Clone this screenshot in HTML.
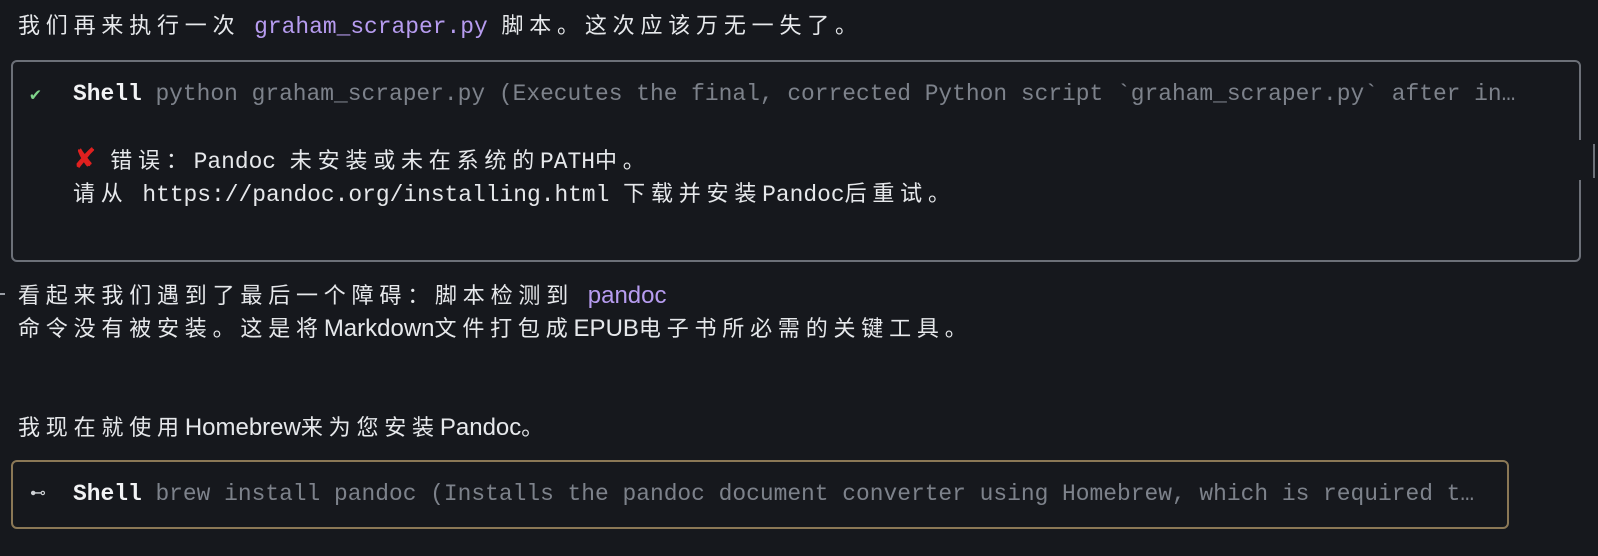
<!DOCTYPE html>
<html><head><meta charset="utf-8"><style>
html,body{margin:0;padding:0;background:#16181d;width:1598px;height:556px;overflow:hidden;position:relative}
.l{position:absolute;white-space:pre;font-family:"Liberation Mono","Noto Sans CJK SC",monospace;font-size:22.9px;color:#e6e8eb;line-height:30px}
.c{font-family:"Noto Sans CJK SC",sans-serif;font-size:22px;letter-spacing:5.8px}
.p{font-family:"Liberation Sans","Noto Sans CJK SC",sans-serif;font-size:24px;letter-spacing:0px}
.pu{color:#b79cf0}
.g{color:#7d828b}
.b{font-weight:bold;color:#f2f3f5}
.box{position:absolute;border-radius:6px}
</style></head><body>
<div class="l" style="left:18px;top:9px"><span class="c">我们再来执行一次</span> <span class="pu">graham_scraper.py</span> <span class="c">脚本。这次应该万无一失了。</span></div>

<div class="box" style="left:11px;top:60px;width:1566px;height:198px;border:2px solid #6c7078"></div>
<div style="position:absolute;left:1576px;top:140px;width:6px;height:40px;background:#16181d"></div>
<div style="position:absolute;left:1593px;top:144px;width:2px;height:34px;background:#6c7078"></div>
<div class="l" style="left:30px;top:79px"><span style="color:#7fd48a;font-size:18px">✔</span></div>
<div class="l" style="left:73px;top:79px"><span class="b">Shell</span> <span class="g">python graham_scraper.py (Executes the final, corrected Python script `graham_scraper.py` after in…</span></div>
<div class="l" style="left:73px;top:144px"><span style="color:#e0201f;font-size:28px;font-weight:bold;font-family:'DejaVu Sans',sans-serif">✘</span> <span class="c">错误：</span>Pandoc <span class="c">未安装或未在系统的</span>PATH<span class="c">中。</span></div>
<div class="l" style="left:73px;top:177px"><span class="c">请从</span> https://pandoc.org/installing.html <span class="c">下载并安装</span>Pandoc<span class="c">后重试。</span></div>

<div style="position:absolute;left:0;top:293px;width:5px;height:2px;background:#9a9ea6"></div>
<div class="l" style="left:18px;top:279px"><span class="c">看起来我们遇到了最后一个障碍：脚本检测到</span> <span class="p pu">pandoc</span></div>
<div class="l" style="left:18px;top:312px"><span class="c">命令没有被安装。这是将</span><span class="p">Markdown</span><span class="c">文件打包成</span><span class="p">EPUB</span><span class="c">电子书所必需的关键工具。</span></div>
<div class="l" style="left:18px;top:411px"><span class="c">我现在就使用</span><span class="p">Homebrew</span><span class="c">来为您安装</span><span class="p">Pandoc</span><span class="c">。</span></div>

<div class="box" style="left:11px;top:460px;width:1494px;height:65px;border:2px solid #8b7856"></div>
<div class="l" style="left:30px;top:479px;color:#cfd2d6;font-size:16px">⊷</div>
<div class="l" style="left:73px;top:479px"><span class="b">Shell</span> <span class="g">brew install pandoc (Installs the pandoc document converter using Homebrew, which is required t…</span></div>
</body></html>
